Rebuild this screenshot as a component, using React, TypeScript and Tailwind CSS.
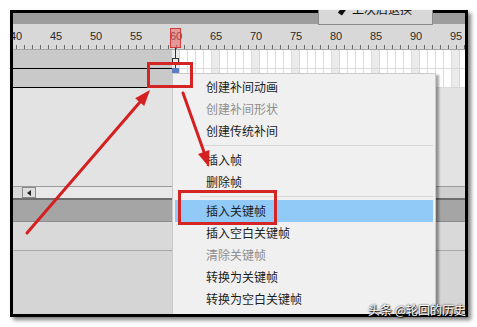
import React from "react";

// frames 40..97, 8px each; cell 40 starts 1px left of the panel edge
const FRAMES = Array.from({ length: 58 }, (_, i) => 40 + i);
const PLAYHEAD = 60;

const menuGroups = [
  [
    { label: "创建补间动画" },
    { label: "创建补间形状", disabled: true },
    { label: "创建传统补间" },
  ],
  [{ label: "插入帧" }, { label: "删除帧" }],
  [
    { label: "插入关键帧", active: true },
    { label: "插入空白关键帧" },
    { label: "清除关键帧", disabled: true },
    { label: "转换为关键帧" },
    { label: "转换为空白关键帧" },
  ],
];

function Ruler() {
  return (
    <div className="h-[26px] bg-[#d8d8d8] border-b border-[#a6a6a6] flex ml-[-1px] shrink-0">
      {FRAMES.map((n) => (
        <div key={n} className="w-[8px] shrink-0 flex flex-col items-center justify-between h-full">
          <span className="mt-[6px] text-[11px] leading-[12px] text-[#2a2a2a] font-['Liberation_Sans',sans-serif] whitespace-nowrap">
            {n % 5 === 0 ? n : ""}
          </span>
          <div className="w-px h-[4px] bg-[#6a6a6a]" />
        </div>
      ))}
    </div>
  );
}

function LayerRow() {
  return (
    <div className="flex ml-[-1px] shrink-0">
      {FRAMES.map((n) => {
        const filled = n < PLAYHEAD;
        return (
          <div
            key={n}
            className={
              filled
                ? "w-[8px] h-[19px] shrink-0 bg-[#c9c9c9] border-b border-black"
                : n % 5 === 0
                ? "w-[8px] h-[19px] shrink-0 bg-[#ebebeb] border-r border-b border-[#d6d6d6]"
                : "w-[8px] h-[19px] shrink-0 bg-white border-r border-b border-[#dcdcdc]"
            }
          />
        );
      })}
    </div>
  );
}

function ContextMenu() {
  return (
    <div className="absolute left-[159px] top-[60px] w-[264px] h-[262px] bg-[#f0f0f0] border border-[#c9c9c9] shadow-[3px_2px_2px_rgba(0,0,0,0.35)] pt-[2px] font-['Noto_Sans_CJK_SC',sans-serif]">
      {menuGroups.map((group, gi) => (
        <div key={gi}>
          {gi > 0 && (
            <div className="h-[7px] flex items-center">
              <div className="h-px flex-1 ml-[27px] mr-[2px] bg-[#d6d6d6]" />
            </div>
          )}
          {group.map((item) => (
            <div
              key={item.label}
              className={`h-[22px] mx-[2px] pl-[31px] flex items-center text-[12px] leading-none ${
                item.active ? "bg-[#91c9f7]" : ""
              } ${item.disabled ? "text-[#8e8e8e]" : "text-[#1c1c1c]"}`}
            >
              {item.label}
            </div>
          ))}
        </div>
      ))}
    </div>
  );
}

function Playhead() {
  return (
    <>
      <div className="absolute left-[162px] top-[35px] w-px h-[40px] bg-[#333]" />
      <div className="absolute left-[157px] top-[15px] w-[11px] h-[20px] border border-[#d43a3a] bg-[rgba(240,100,100,0.55)]" />
      <div className="absolute left-[159px] top-[45px] w-[7px] h-[6px] border border-[#333] bg-[#e8e8e8]" />
      <div className="absolute left-[159px] top-[55px] w-[7px] h-[5px] bg-[#5a7cc0]" />
    </>
  );
}

function Arrows() {
  return (
    <svg className="absolute left-0 top-0 pointer-events-none" width="477" height="327" viewBox="0 0 477 327">
      <g stroke="#d42020" strokeWidth="3" strokeLinecap="round" fill="#d42020">
        <line x1="27" y1="233" x2="140" y2="102" />
        <line x1="183" y1="93" x2="204" y2="152" />
      </g>
      <g fill="#d42020">
        <polygon points="150,90 144.2,106 135.1,98.2" />
        <polygon points="209,167 198,153.9 209.4,149.9" />
      </g>
    </svg>
  );
}

export default function App() {
  return (
    <div className="relative w-[477px] h-[327px] bg-white overflow-hidden">
      <div className="pt-[10px] pl-[10px]">
        <div className="relative w-[458px] h-[307px] border-[3px] border-black shadow-[3px_3px_4px_rgba(0,0,0,0.5)] overflow-hidden flex flex-col bg-[#d6d6d6]">
          <div className="h-[11px] bg-[#9d9d9d] shrink-0" />
          <Ruler />
          <LayerRow />
          <LayerRow />
          <div className="h-[98px] bg-[#e3e3e3] shrink-0" />

          {/* horizontal scrollbar */}
          <div className="h-[12px] border-t border-[#9a9a9a] flex shrink-0">
            <div className="w-[9px] bg-[#d9d9d9]" />
            <div className="w-[14px] bg-[#dedede] border border-[#8a8a8a] flex items-center justify-center">
              <div className="w-0 h-0 border-y-[3px] border-y-transparent border-r-[4px] border-r-[#222]" />
            </div>
            <div className="w-[136px] bg-[#e8e8e8]" />
            <div className="flex-1 bg-[#cfcfcf]" />
          </div>
          <div className="h-[2px] bg-[#6e6e6e] shrink-0" />
          <div className="h-[22px] bg-[#a5a5a5] border-b border-[#8c8c8c] shrink-0" />
          <div className="h-[29px] bg-[#d9d9d9] border-b border-[#a8a8a8] shrink-0" />
          <div className="flex-1 bg-[#d5d5d5]" />

          <Playhead />
          <ContextMenu />
        </div>
      </div>

      {/* panel button peeking in at the top */}
      <div className="absolute left-[318px] top-[10px] w-[115px] h-[15px] overflow-hidden bg-[#d8d8d8] border-x border-b border-[#8a8a8a]">
        <div className="absolute left-[21px] top-[-8px] flex items-end gap-[7px] text-[12px] leading-[14px] text-[#111] font-['Noto_Sans_CJK_SC',sans-serif]">
          <span className="w-[5px] h-[9px] bg-[#111] rotate-[35deg] mb-[1px]" />
          <span>上次后退换</span>
        </div>
      </div>

      {/* annotations */}
      <div className="absolute left-[147px] top-[62px] w-[46px] h-[26px] border-[3px] border-[#d42424]" />
      <div className="absolute left-[178px] top-[190px] w-[99px] h-[35px] border-[3px] border-[#d42424]" />
      <Arrows />

      <div className="absolute left-[368px] top-[303px] text-[12px] leading-[14px] text-white font-['Noto_Sans_CJK_SC',sans-serif] [text-shadow:0_0_2px_#000,1px_1px_1px_#000]">
        头条 @轮回的历史
      </div>
    </div>
  );
}
